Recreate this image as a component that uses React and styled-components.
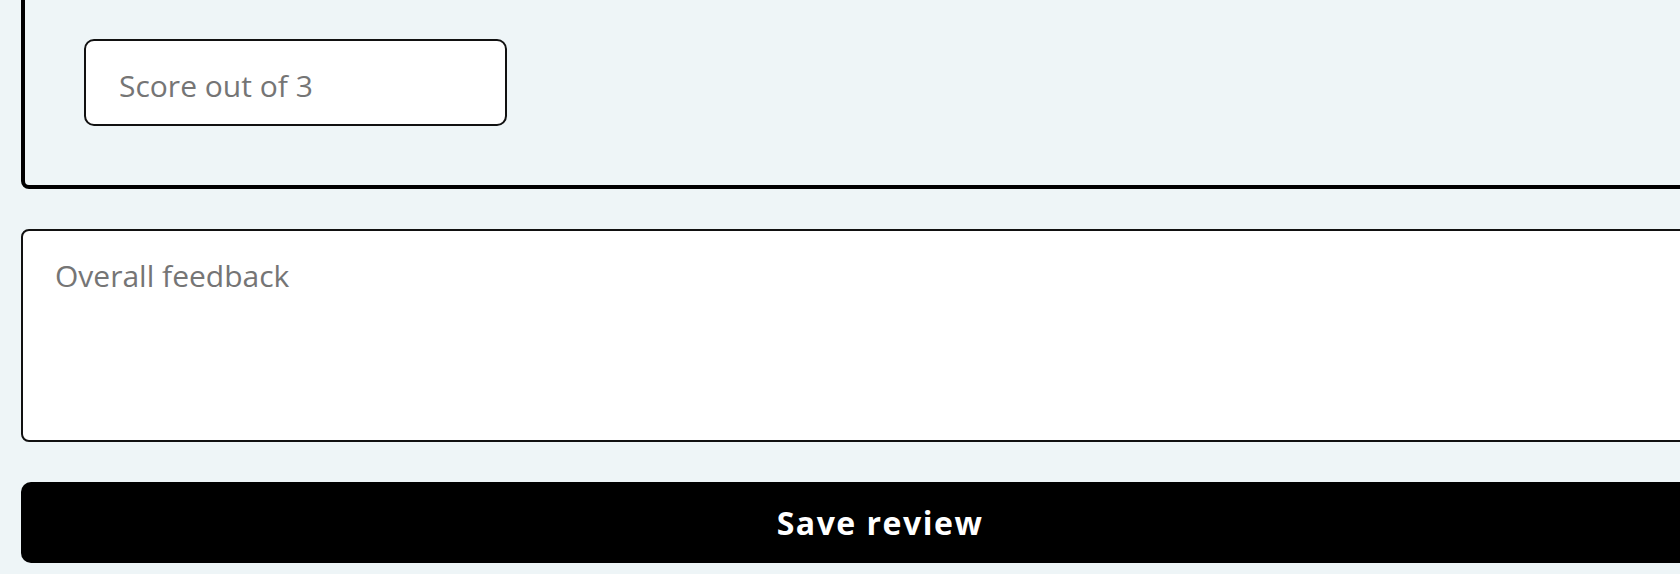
import { styled, createGlobalStyle } from "styled-components";

const GlobalStyle = createGlobalStyle`
  html, body {
    margin: 0;
    padding: 0;
    overflow: hidden;
    background: #eef5f7;
  }
  * {
    box-sizing: border-box;
  }
`;

const Page = styled.div`
  width: 1739px;
  padding-left: 21px;
  display: flex;
  flex-direction: column;
  gap: 40px;
  font-family: "Open Sans", "Noto Sans", sans-serif;
`;

const ReviewCard = styled.div`
  margin-top: -24px;
  border: 4px solid #000;
  border-radius: 8px;
  padding: 59px;
  background: #eef5f7;
`;

const ScoreInput = styled.input`
  display: block;
  width: 423px;
  height: 87px;
  margin: 0;
  padding: 24px 33px 18px;
  border: 2px solid #111;
  border-radius: 10px;
  background: #fff;
  font-family: inherit;
  font-size: 30px;
  color: #222;
  outline: none;

  &::placeholder {
    color: #757575;
  }
`;

const Feedback = styled.textarea`
  display: block;
  width: 100%;
  height: 213px;
  margin: 0;
  padding: 24px 32px;
  border: 2px solid #111;
  border-radius: 8px;
  background: #fff;
  font-family: inherit;
  font-size: 30px;
  line-height: normal;
  color: #222;
  resize: none;
  outline: none;

  &::placeholder {
    color: #757575;
  }
`;

const SaveButton = styled.button`
  display: block;
  width: 100%;
  height: 81px;
  margin: 0;
  border: none;
  border-radius: 10px;
  background: #000;
  color: #fff;
  font-family: inherit;
  font-size: 32px;
  font-weight: 700;
  letter-spacing: 1.5px;
  cursor: pointer;
`;

export default function App() {
  return (
    <>
      <GlobalStyle />
      <Page>
        <ReviewCard>
          <ScoreInput type="text" placeholder="Score out of 3" />
        </ReviewCard>
        <Feedback placeholder="Overall feedback" />
        <SaveButton type="button">Save review</SaveButton>
      </Page>
    </>
  );
}
